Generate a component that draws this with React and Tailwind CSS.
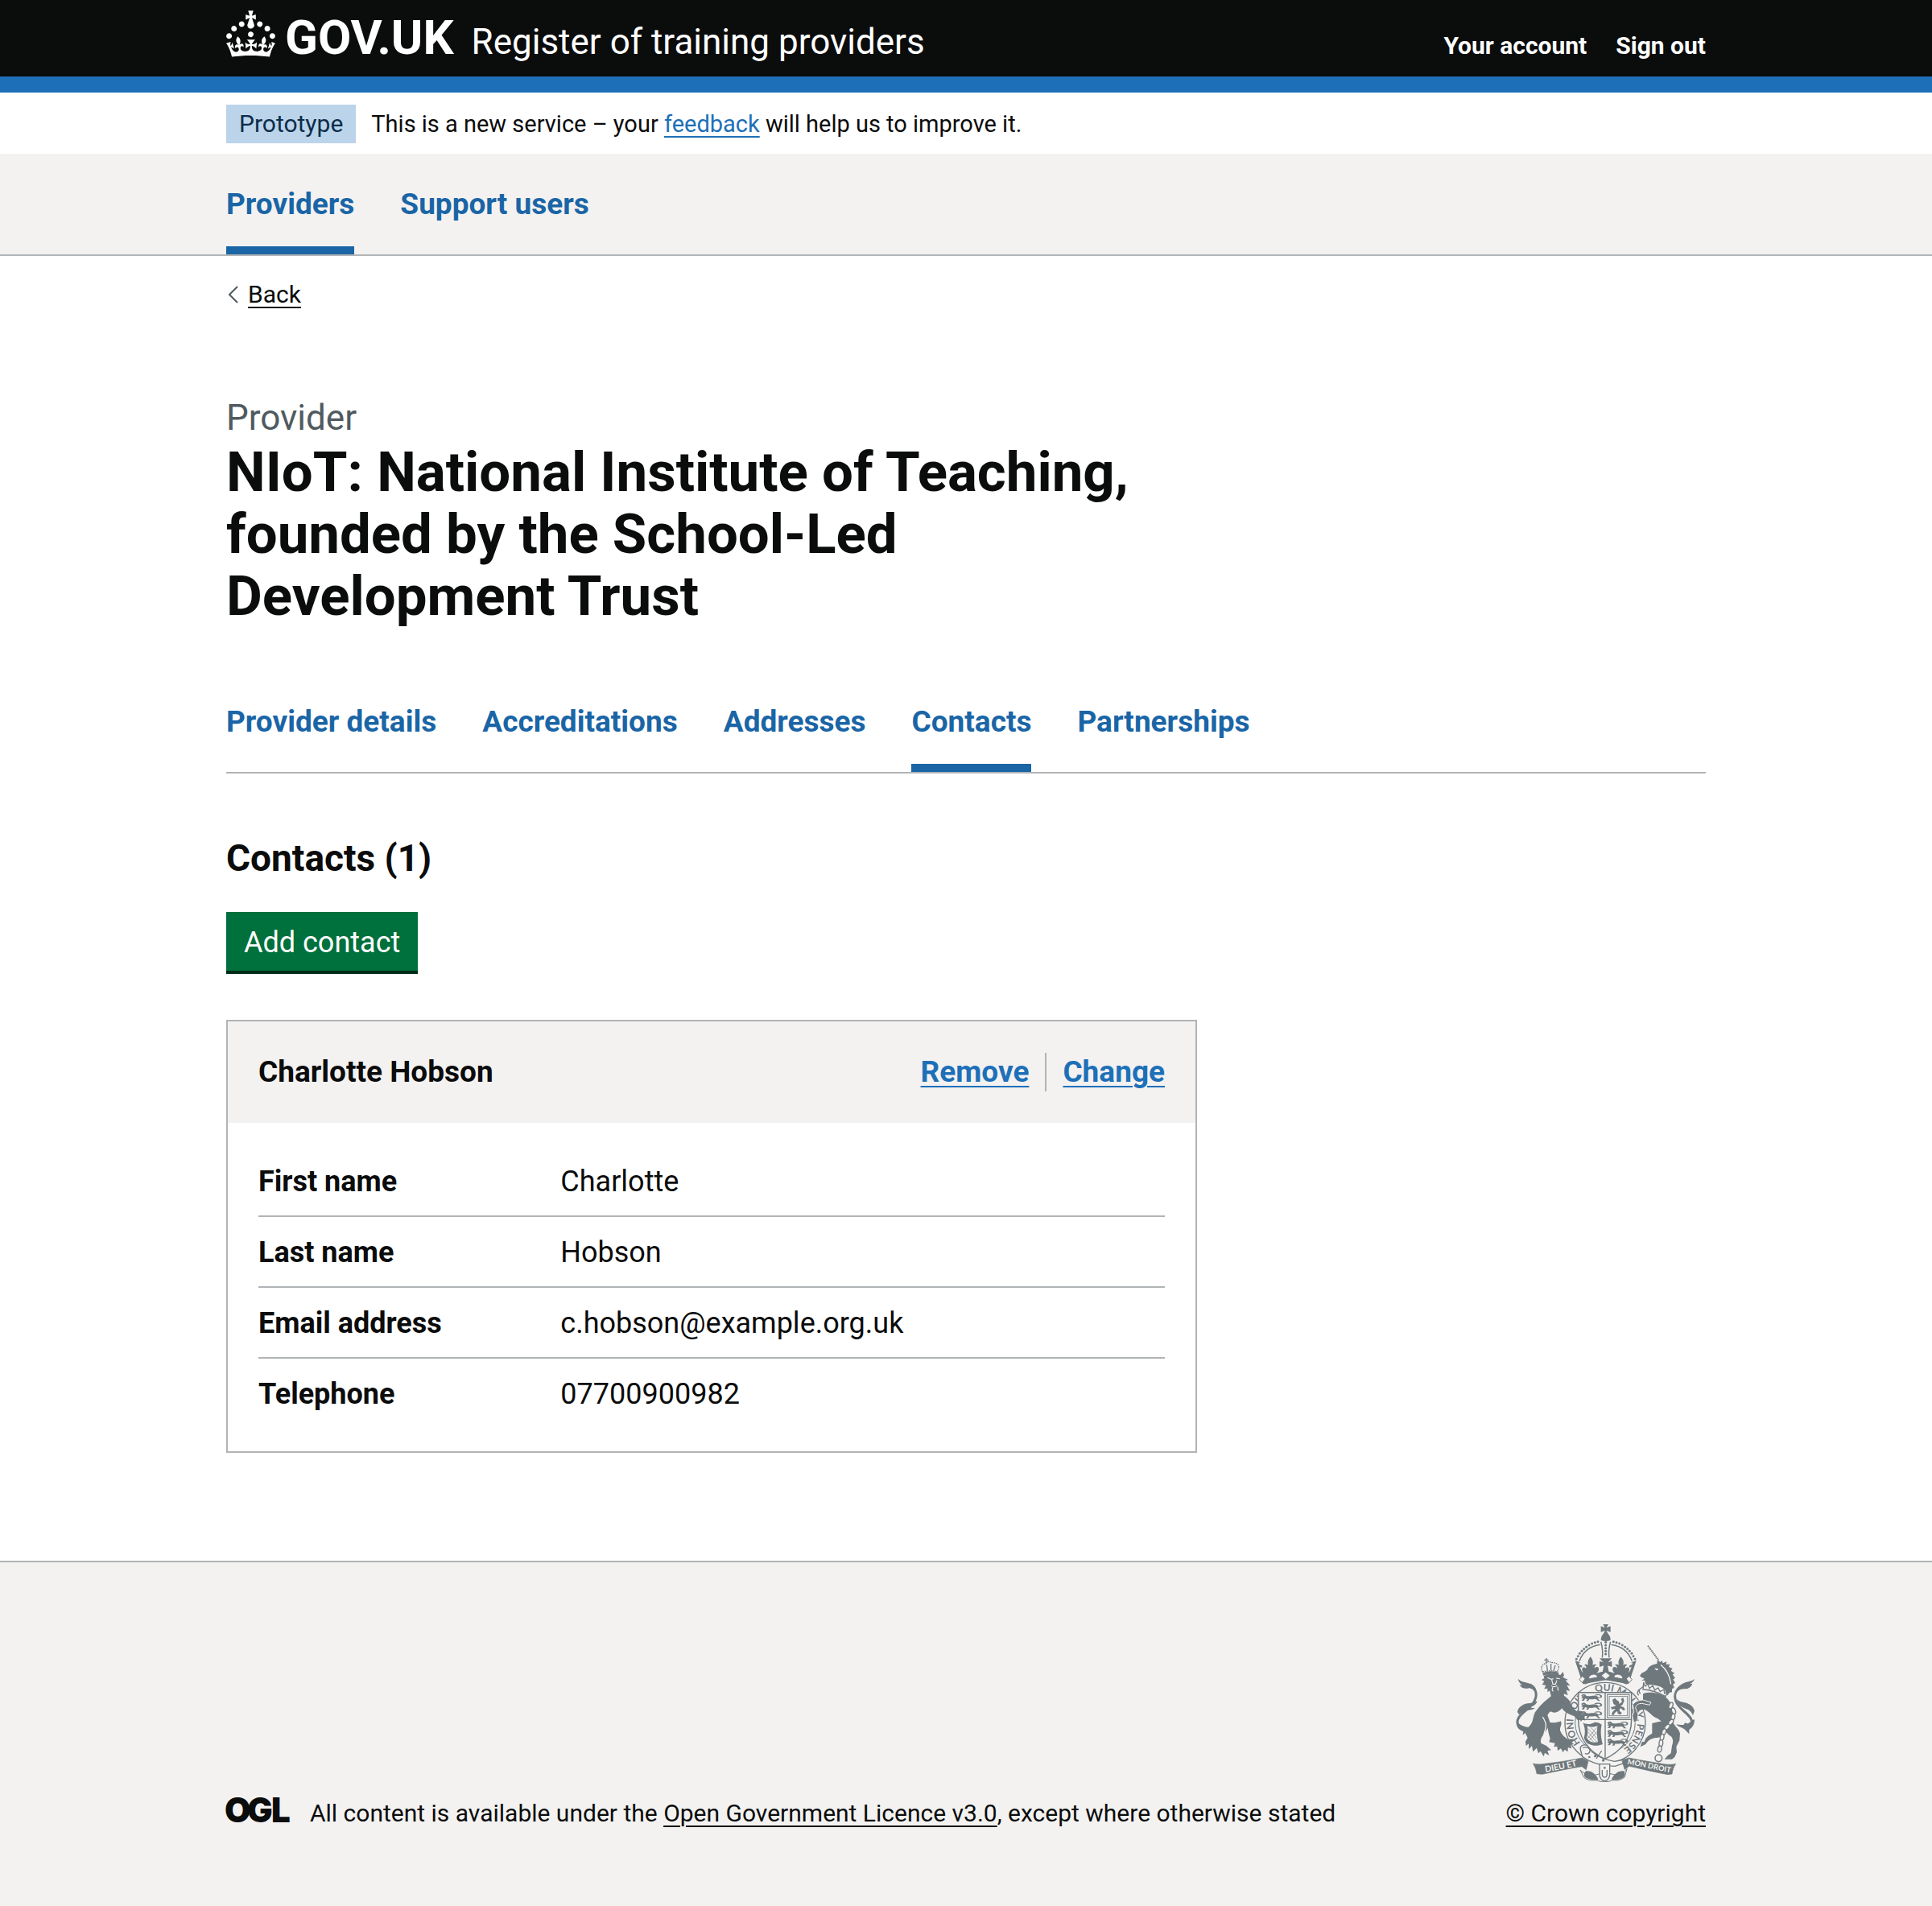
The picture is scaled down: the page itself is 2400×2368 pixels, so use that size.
const NAV = ["Providers", "Support users"];
const TABS = ["Provider details", "Accreditations", "Addresses", "Contacts", "Partnerships"];
const DETAILS = [
  ["First name", "Charlotte"],
  ["Last name", "Hobson"],
  ["Email address", "c.hobson@example.org.uk"],
  ["Telephone", "07700900982"],
];

function Container({ className = "", children }) {
  return <div className={`mx-auto w-full max-w-[1838px] ${className}`}>{children}</div>;
}

function Crown() {
  return (
    <svg viewBox="0 0 32 28" className="h-[54px] w-[61px] shrink-0 overflow-visible fill-white" aria-hidden="true">
      <path d="M22.6 10.4c-1 .4-2-.1-2.4-1-.4-.9.1-2 1-2.4.9-.4 2 .1 2.4 1s-.1 2-1 2.4m-5.9 6.7c-.9.4-2-.1-2.4-1-.4-.9.1-2 1-2.4.9-.4 2 .1 2.4 1s-.1 2-1 2.4m10.8-3.7c-1 .4-2-.1-2.4-1-.4-.9.1-2 1-2.4.9-.4 2 .1 2.4 1s0 2-1 2.4m3.3 4.8c-1 .4-2-.1-2.4-1-.4-.9.1-2 1-2.4.9-.4 2 .1 2.4 1s-.1 2-1 2.4M17 4.7l2.3 1.2V2.5l-2.3.7-.2-.2.9-3h-3.4l.9 3-.2.2c-.1.1-2.3-.7-2.3-.7v3.4L15 4.7c.1.1.1.2.2.2l-1.3 4c-.1.2-.1.4-.1.6 0 1.1.8 2 1.9 2.2h.7c1-.2 1.9-1.1 1.9-2.1 0-.2 0-.4-.1-.6l-1.3-4c-.1-.2 0-.2.1-.3m-7.6 5.7c.9.4 2-.1 2.4-1 .4-.9-.1-2-1-2.4-.9-.4-2 .1-2.4 1s0 2 1 2.4m-5 3c.9.4 2-.1 2.4-1 .4-.9-.1-2-1-2.4-.9-.4-2 .1-2.4 1s.1 2 1 2.4m-3.2 4.8c.9.4 2-.1 2.4-1 .4-.9-.1-2-1-2.4-.9-.4-2 .1-2.4 1s0 2 1 2.4m14.8 11c4.4 0 8.6.3 12.3.8 1.1-4.5 2.4-7 3.7-8.8l-2.5-.9c.2 1.3.3 1.9 0 2.7-.4-.4-.8-1.1-1.1-2.3l-1.2 4c.7-.5 1.3-.8 2-.9-1.1 2.5-2.6 3.1-3.5 3-1.1-.2-1.7-1.2-1.5-2.1.3-1.2 1.5-1.5 2.1-.1 1.1-2.3-.8-3-2-2.3 1.9-1.9 2.1-3.5.6-5.6-2.1 1.6-2.1 3.2-1.2 5.5-1.2-1.4-3.2-.6-2.5 1.6.9-1.4 2.1-.5 1.9.8-.2 1.1-1.7 2.1-3.5 1.9-2.7-.2-2.9-2.1-2.9-3.6.7-.1 1.9.5 2.9 1.9l.4-4.3c-1.1 1.1-2.1 1.4-3.2 1.4.4-1.2 2.1-3 2.1-3h-5.4s1.7 1.9 2.1 3c-1.1 0-2.1-.2-3.2-1.4l.4 4.3c1-1.4 2.2-2 2.9-1.9-.1 1.5-.2 3.4-2.9 3.6-1.9.2-3.4-.8-3.5-1.9-.2-1.3 1-2.2 1.9-.8.7-2.3-1.2-3-2.5-1.6.9-2.2.9-3.9-1.2-5.5-1.5 2-1.3 3.7.6 5.6-1.2-.7-3.1 0-2 2.3.6-1.4 1.8-1.1 2.1.1.2.9-.3 1.9-1.5 2.1-.9.2-2.4-.5-3.5-3 .6 0 1.2.3 2 .9l-1.2-4c-.3 1.1-.7 1.9-1.1 2.3-.3-.8-.2-1.4 0-2.7l-2.9.9C1.3 23 2.6 25.5 3.7 30c3.7-.5 7.9-.8 12.3-.8" />
    </svg>
  );
}

const INK = "#6f787c";
const PAPER = "#f3f2f1";

/* One walking lion, reused for the English quarters. */
function Passant({ y, x }) {
  return (
    <g transform={`translate(${x} ${y})`} fill={INK} stroke="none">
      <path d="M0 6c3-6 10-8 15-4l3 4c6 3 14 2 20 1 10-1 20-1 24 4 3 5-1 8 5 11l4 4h-9c-2-5-7-7-12-8-8 2-14 2-20 1l-4 7h-8l5-7-9-2-4 8H1l6-8-8-3 6-3z" />
      <path d="M60 11c8 3 14-1 10-5-5-5-14 1-22-1 6-5 22-6 28 0 5 6-2 13-16 9z" />
      <path d="M7 6l4 1" stroke={PAPER} strokeWidth="2" />
    </g>
  );
}

/* Right-hand half of the imperial crown, mirrored for the left. */
function CrownHalf() {
  const beads = [
    [436, 150], [447, 153], [458, 157], [469, 163], [479, 170], [488, 177],
    [496, 185], [504, 194], [510, 204], [516, 215],
  ];
  return (
    <g>
      {beads.map(([cx, cy]) => (
        <circle key={cx} cx={cx} cy={cy} r="4.4" fill={INK} />
      ))}
      <path d="M428 161Q486 170 505 222" fill="none" stroke={INK} strokeWidth="4.5" />
      <path d="M425 150Q416 180 420 209" fill="none" stroke={INK} strokeWidth="4.5" />
      <path
        d="M407 262h16l18 6c-6-6-10-12-8-20 4-6 12-5 15 1 2-7 0-10-7-12 4-4 10-4 15 0-3-10-2-20 8-31 9 11 12 21 8 31 6-4 12-3 15 1-7 2-9 6-6 12 4-5 10-6 13-1 3 5 0 11-4 17 8-4 10-14 13-22l-9 2 2-8 9-2 2-8-7-1 21-6-18 54-11 33-85-15z"
        fill={INK}
      />
      <path d="M424 258c9-6 6-16-2-20l16-6-5 16z" fill={PAPER} />
      <ellipse cx="454" cy="282" rx="15" ry="9" fill={PAPER} transform="rotate(10 454 282)" />
      <path d="M484 288l10-10 11 13-11 12z" fill={PAPER} stroke={INK} strokeWidth="3" />
    </g>
  );
}

function CrownTop() {
  return (
    <g>
      <CrownHalf />
      <g transform="translate(814 0) scale(-1 1)">
        <CrownHalf />
      </g>
      <path d="M397 85h20l-7 13 15-6v22l-15-6 6 14h-18l6-14-15 6V92l15 6z" fill={INK} />
      <path d="M407 118c10 0 18 10 18 26-12 5-24 5-36 0 0-16 8-26 18-26z" fill={INK} />
      {[152, 163, 174, 185, 196].map((cy) => (
        <circle key={cy} cx="407" cy={cy} r="4.6" fill={INK} />
      ))}
      <path d="M384 212h46l-14 15 14-5v22l-16-5 6 30h-26l6-30-16 5v-22l14 5z" fill={INK} />
      <path d="M329 309q78-33 156 0l4-16q-82-26-164 0z" fill={INK} />
      <path d="M392 276l15-12 15 12-15 13z" fill={PAPER} />
    </g>
  );
}

function Lion() {
  return (
    <g fill={INK}>
      <path d="M172 262c-8-12-4-26 8-30 6-8 18-10 24-4 12-2 28 4 28 16 0 8-4 14-6 18-18-6-36-4-54 0z" fill="none" stroke={INK} strokeWidth="4" strokeDasharray="5 3" />
      <path d="M186 211v22M178 218h16M203 232v24M187 236l3 22M219 238l-6 20" fill="none" stroke={INK} strokeWidth="4" />
      <path d="M172 266q28-12 60-2l-2 10q-28-8-56 2z" />
      <path d="M176 278c14-10 44-12 62-4l10-12 4 14-5 6 20 10-10 2 18 20-13-2 12 22-14-4 6 20-14-6-2 16c-8-8-16-14-20-22l-2 24-12-18-10 18-8-30-8 6 0-14-12 2 6-14-14-2 8-12-10-6 10-6z" />
      <path d="M190 284l14 6 8-2M222 286l14 2M206 292l4 16h10l5-14M204 314q10 8 22 0M210 320q-6 14 2 14M228 318l2 14" fill="none" stroke={PAPER} strokeWidth="3.5" />
      <path d="M218 342c-26 18-56 44-72 68-10 14-8 34-18 48-8 12-20 16-20 34l8 16-8 14 2 16 10-8 0 20 12-12 4 22 14-14 6 20 8-8 12 20 4-14 16 10-6-18 14-2-18-16-20-10c-4-14 4-26 12-36 10-14 20-28 20-46l-8-22c4-8 8-12 12-14 12 8 30 4 42-12 8 14 26 22 46 30l12 14 10-2 2 8 8-8 8 4-2-14-12-10 10-2-8-10-20 0c-12-8-20-20-24-34-8-16-26-24-40-36z" />
      <path d="M190 448c18 6 38 4 50-2l2 10c-4 14-8 22-2 30 4 12 18 22 26 28l22-2-8 12 8 8-12 2 4 14-14-4 0 16-12-8-6 10-8-14-12 8-2-16-12 2 4-14-22-4 4-14c-8-20-10-42-10-62z" />
      <path d="M172 430c8 16 14 18 12 36s-10 26-8 42" fill="none" stroke={PAPER} strokeWidth="4" />
      <path d="M134 474c-26 14-54 4-56-22-2-34 48-48 64-82 12-26 4-48-18-52" fill="none" stroke={INK} strokeWidth="9" />
      <path d="M80 288c14 14 30 12 50 20 10 6 16 12 18 22-12-10-22-8-32-6-14 2-24-2-30-14l10 2c-10-8-14-14-16-24zM78 412c2-16 14-24 28-30 14-4 34-2 46-12-4 18-18 20-28 24 8 4 14 4 20 2-14 14-40 4-60 26zM74 444c2 28 16 30 26 40l-2 14 18-16c8-8 6-10 0-14-16-2-30-8-42-24z" />
    </g>
  );
}

function Unicorn() {
  return (
    <g fill={INK}>
      <path d="M564 165l40 54" fill="none" stroke={INK} strokeWidth="6" strokeDasharray="5 2" />
      <path d="M540 268c10-6 20-8 24-18 8-12 22-16 34-18l2-14 10 8 6-6 4 10 14-6-2 10 14 0-4 10 14 6-6 8 14 10-8 4 10 14-8 4 8 14-8 4 4 14-8 4 0 12-10 2-6 10c-10-10-6-20-20-28-20-12-44-10-62-14l-4-14-12 0 12-6-12-6-6-4z" />
      <path d="M590 250l8 4M612 236c20 16 34 42 38 72" fill="none" stroke={PAPER} strokeWidth="4" />
      <circle cx="598" cy="253" r="4" fill={PAPER} />
      <path d="M548 302l6 14 10-8 6 16 12-10 8 16 12-8 8 14 14-8 2 14 12-2-8 14q-42-24-84-26z" fill={PAPER} stroke={INK} strokeWidth="4" />
      <path d="M546 344c30-10 62-2 84 12 14 12 22 26 26 42-2 20-4 38 2 52 6 16 22 24 26 42l-2 26-12 24 2 20-8 18-10 8-28 0 12-14 12-8 4-28c4-12 6-22-2-34-14-8-22-18-26-32-6-20-14-32-32-38-18-10-24-24-44-32-20 0-24 12-24 28l4 16-14-4-10-22c-2-24 12-44 40-54z" />
      <path d="M508 384c10-14 28-18 42-16l26 8-6 10-28-6c-14 0-22 6-24 16l10 26-4 24-12 6-6-26 6-14z" stroke={PAPER} strokeWidth="3" />
      <path d="M580 454c18-4 34-8 46-8l-2 34c-4 18-14 26-26 28-14 0-32 6-42 24l-20 10 6-18 10-2c2-14 14-22 28-30z" />
      <path d="M536 344c-6-8-6-16 2-20l10-8M530 350c-6-6-6-16 2-22" fill="none" stroke={INK} strokeWidth="4" />
      <path d="M700 456c22 12 34-2 24-20-12-22-46-36-56-66-8-24 2-46 28-58" fill="none" stroke={INK} strokeWidth="9" />
      <path d="M738 288c-12 12-28 8-44 18-14 8-24 18-24 34 10-12 20-14 32-14 14 0 24-8 28-20l-10 2c10-6 16-12 18-20zM738 408c-4-18-16-24-30-30-14-4-24-2-36-14 2 18 14 26 28 34l12 4c10 4 16 12 20 22zM738 440c0 24-12 32-20 38l0 16-18-18c-14-10-24-8-30-18 20 4 44 4 58-16z" />
      {[
        [650, 388, 20], [660, 408, -20], [658, 430, 10], [650, 450, 35], [636, 468, 40],
        [624, 486, 20], [617, 506, 10], [613, 528, 5], [608, 550, 10],
      ].map(([cx, cy, r]) => (
        <ellipse key={cy} cx={cx} cy={cy} rx="7" ry="12" transform={`rotate(${r} ${cx} ${cy})`} fill={PAPER} stroke={INK} strokeWidth="4" />
      ))}
      <circle cx="604" cy="584" r="13" fill="none" stroke={INK} strokeWidth="4.5" />
    </g>
  );
}

const GARTER_WORDS = [
  ["HONI", 22], ["SOIT", 130], ["QUI", 254], ["MAL", 330], ["Y", 440], ["PENSE", 480],
];

function Shield() {
  return (
    <g>
      <circle cx="405" cy="452" r="150" fill={PAPER} stroke={INK} strokeWidth="4" />
      <circle cx="405" cy="452" r="112" fill="none" stroke={INK} strokeWidth="3" />
      <path id="garter" d="M328.500 543A119 119 0 1 1 455 560" fill="none" />
      {GARTER_WORDS.map(([word, offset]) => (
        <text key={word} fill={INK} fontFamily="Lato, sans-serif" fontSize="36" fontWeight="700">
          <textPath href="#garter" startOffset={offset}>{word}</textPath>
        </text>
      ))}
      <path d="M305 339h198v100c0 74-42 122-99 148-57-26-99-74-99-148z" fill={PAPER} stroke={INK} strokeWidth="4.5" />
      <path d="M405 339v246M305 440h198" stroke={INK} strokeWidth="4" />
      {[345, 377, 409].map((y) => (
        <Passant key={y} x={316} y={y} />
      ))}
      {[447, 479, 511].map((y) => (
        <Passant key={y} x={413} y={y} />
      ))}
      <rect x="413" y="347" width="82" height="86" fill="none" stroke={INK} strokeWidth="3" />
      <rect x="420" y="354" width="68" height="72" fill="none" stroke={INK} strokeWidth="2.500" />
      <path d="M432 366l10-6 6 8 8 4 2 10 10-8-4-10 8-6 4 12-6 14-8 6 12 4 6 10-8 2-8-8-6 4 2 8 8 6-8 6-8-4-2-10-8 6-6 10-8-4 6-10 10-10-14 2-4-8 10-2 10-4-10-6z" fill={INK} />
      <path d="M322 452c14 8 30 6 44-2 14 0 22 4 26 10-6 24-2 52 4 72-16 6-34 8-50 0-10-2-16-12-20-24 6-18 4-38-4-56zM338 464c4 16 2 34-2 44 10 16 24 20 42 16-4-20-4-40-2-60-12 4-26 6-38 0z" fill={INK} fillRule="evenodd" />
      <path d="M342 474l32 36M340 486l34 38M352 470l24 28M340 500l22 24M374 470l-34 40M376 484l-30 34" stroke={INK} strokeWidth="2" />
    </g>
  );
}

function Ribbon() {
  return (
    <g>
      <path d="M312 628c14 14 26 18 46 22 30-12 66-12 96 0 10-6 22-10 32-26l-8 30c-14 12-30 14-44 12-18 8-44 8-62 0-16 2-34 0-46-10z" fill={PAPER} stroke={INK} strokeWidth="3" />
      <path d="M334 632c16-2 34 6 46 32-18 2-38 0-50-8-6-10-4-18 4-24zM474 632c-16-2-34 6-46 32 18 2 34 0 46-8 6-10 6-16 0-24z" fill={INK} />
      <path d="M314 556c-6-18 8-24 24-20l20 26c28 22 52 30 82 34 24-4 42-8 56-10l-14 14-40 14c-44 0-92-12-122-36z" fill={PAPER} stroke={INK} strokeWidth="4" />
      <path d="M322 546c10-6 24-2 26 8s-10 18-18 12M392 556l-20 30" fill="none" stroke={INK} strokeWidth="4" />
      <g fill={INK}>
        <circle cx="368" cy="576" r="5" />
        <circle cx="398" cy="592" r="5" />
        <circle cx="346" cy="580" r="4" />
      </g>
      <path d="M384 606h38v38c0 14-8 24-19 24s-19-10-19-24z" fill={PAPER} stroke={INK} strokeWidth="4" />
      <path d="M394 628v14c0 8 4 13 9 13s9-5 9-13v-14" fill="none" stroke={INK} strokeWidth="4" />
      <circle cx="403" cy="620" r="4" fill={INK} />
      <path d="M136 604c10 4 30 3 44 1 50-6 90-12 140-22l22 12-8 32-16-12c-50 8-96 18-148 29l-20-2c-2-14-6-26-14-38z" fill={INK} stroke={INK} strokeWidth="2" />
      <path d="M668 605c-12 4-28 3-44 1-46-8-88-14-132-23l-24 12 10 32 16-13c48 10 94 22 144 31l16-2c2-14 6-26 14-38z" fill={INK} stroke={INK} strokeWidth="2" />
      <path id="motto-left" d="M182 636Q250 626 322 607" fill="none" />
      <path id="motto-right" d="M487 606Q560 620 652 639" fill="none" />
      <g fill={PAPER} fontFamily="Lato, sans-serif" fontWeight="700">
        <text fontSize="32"><textPath href="#motto-left">DIEU ET</textPath></text>
        <text fontSize="28"><textPath href="#motto-right">MON DROIT</textPath></text>
      </g>
    </g>
  );
}

function RoyalArms() {
  return (
    <svg viewBox="66 82 681 591" className="h-[197px] w-[227px]" aria-hidden="true">
      <Shield />
      <CrownTop />
      <Lion />
      <Unicorn />
      <Ribbon />
    </svg>
  );
}

function OglLogo() {
  return (
    <svg viewBox="0 0 78 32" className="mb-[7px] h-8 w-[78px] shrink-0 overflow-visible" role="img" aria-label="Open Government Licence">
      <g fill="#0b0c0c" fontFamily="Inter, sans-serif" fontSize="42" fontWeight="900">
        <text x="-2" y="31">O</text>
        <text x="26" y="31">G</text>
        <text x="56" y="31">L</text>
      </g>
    </svg>
  );
}

function TabList({ items, current, label }) {
  return (
    <nav aria-label={label}>
      <ul className="flex gap-[57px]">
        {items.map((item) => (
          <li key={item}>
            <a
              href="#"
              aria-current={item === current ? "page" : undefined}
              className={`block border-b-10 pt-[39px] pb-7 text-[37px] leading-12 font-bold text-[#1a65a6] ${
                item === current ? "border-[#1a65a6]" : "border-transparent"
              }`}
            >
              {item}
            </a>
          </li>
        ))}
      </ul>
    </nav>
  );
}

const UNDERLINE = "underline decoration-2 underline-offset-[5px]";

export default function App() {
  return (
    <div className="flex min-h-screen flex-col bg-white font-[Roboto,sans-serif] text-[#0b0c0c]">
      <header className="border-b-[20px] border-[#1d70b8] bg-[#0b0c0c] text-white">
        <Container className="flex items-baseline justify-between pt-[13px] pb-[18px]">
          <a href="#" className="flex items-baseline">
            <Crown />
            <span className="ml-3 text-[60px] leading-[60px] font-bold">GOV.UK</span>
            <span className="ml-[22px] text-[44px] leading-12">Register of training providers</span>
          </a>
          <nav aria-label="Account" className="flex gap-9 text-[30px] leading-[38px] font-bold">
            <a href="#">Your account</a>
            <a href="#">Sign out</a>
          </nav>
        </Container>
      </header>

      <Container className="flex items-baseline gap-[19px] pt-[15px] pb-[13px] leading-[38px]">
        <strong className="bg-[#bbd4ea] px-4 py-[5px] text-[30px] font-normal text-[#0c2d4a]">Prototype</strong>
        <p className="text-[29px]">
          This is a new service – your{" "}
          <a href="#" className={`text-[#1d70b8] ${UNDERLINE}`}>feedback</a> will help us to improve it.
        </p>
      </Container>

      <div className="border-b-2 border-[#b1b4b6] bg-[#f3f2f1]">
        <Container>
          <TabList items={NAV} current="Providers" label="Service" />
        </Container>
      </div>

      <Container className="pt-[29px] pb-[134px]">
        <a href="#" className="inline-flex items-center gap-3 align-top text-[30px] leading-[38px]">
          <svg viewBox="0 0 15 22" className="h-[22px] w-[15px]" fill="none" stroke="#505a5f" strokeWidth="2" aria-hidden="true">
            <path d="M14 1L4 11l10 10" />
          </svg>
          <span className={UNDERLINE}>Back</span>
        </a>

        <main className="pt-[105px]">
          <div className="max-w-[1206px]">
            <span className="block text-[44px] leading-[58px] text-[#505a5f]">Provider</span>
            <h1 className="text-[69px] leading-[77px] font-bold">
              NIoT: National Institute of Teaching, founded by the School-Led Development Trust
            </h1>
          </div>

          <div className="mt-[55px] border-b-2 border-[#b1b4b6]">
            <TabList items={TABS} current="Contacts" label="Provider" />
          </div>

          <h2 className="mt-[77px] text-[46px] leading-[57px] font-bold">Contacts (1)</h2>
          <button type="button" className="mt-[38px] block bg-[#00703c] px-[22px] pt-[19px] pb-[15px] text-[36px] leading-[39px] text-white shadow-[0_4px_0_#002d18]">
            Add contact
          </button>

          <section className="mt-[61px] max-w-[1206px] border-2 border-[#b1b4b6]">
            <div className="flex items-start justify-between bg-[#f3f2f1] px-[38px] py-[39px] text-[37px] leading-12 font-bold">
              <h3>Charlotte Hobson</h3>
              <div className="flex text-[#1d70b8]">
                <a href="#" className={`border-r-2 border-[#b1b4b6] pr-5 ${UNDERLINE}`}>Remove</a>
                <a href="#" className={`pl-5 ${UNDERLINE}`}>Change</a>
              </div>
            </div>
            <dl className="px-[38px] py-[29px] text-[36px] leading-12">
              {DETAILS.map(([term, value]) => (
                <div key={term} className="flex border-b-2 border-[#b1b4b6] pt-5 pb-[18px] last:border-b-0">
                  <dt className="w-1/3 font-bold">{term}</dt>
                  <dd>{value}</dd>
                </div>
              ))}
            </dl>
          </section>
        </main>
      </Container>

      <footer className="grow border-t-2 border-[#b1b4b6] bg-[#f3f2f1] pt-[76px] pb-[90px] text-[30px] leading-[38px]">
        <Container className="flex items-end justify-between">
          <div className="flex items-end gap-[26px]">
            <OglLogo />
            <p>
              All content is available under the{" "}
              <a href="#" className={UNDERLINE}>Open Government Licence v3.0</a>, except where otherwise stated
            </p>
          </div>
          <a href="#" className="flex flex-col items-center gap-5">
            <RoyalArms />
            <span className={UNDERLINE}>© Crown copyright</span>
          </a>
        </Container>
      </footer>
    </div>
  );
}
